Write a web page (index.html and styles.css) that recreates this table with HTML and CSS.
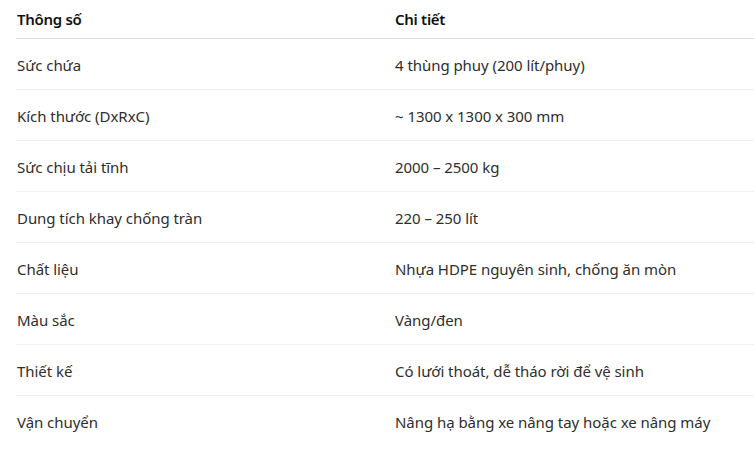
FILE: index.html
```html
<!DOCTYPE html>
<html lang="vi">
<head>
<meta charset="utf-8">
<link rel="stylesheet" href="styles.css">
</head>
<body>
<table class="spec">
  <colgroup><col class="c1"><col class="c2"></colgroup>
  <thead>
    <tr><th>Thông số</th><th>Chi tiết</th></tr>
  </thead>
  <tbody>
    <tr><td>Sức chứa</td><td>4 thùng phuy (200 lít/phuy)</td></tr>
    <tr><td>Kích thước (DxRxC)</td><td>~ 1300 x 1300 x 300 mm</td></tr>
    <tr><td>Sức chịu tải tĩnh</td><td>2000 – 2500 kg</td></tr>
    <tr><td>Dung tích khay chống tràn</td><td>220 – 250 lít</td></tr>
    <tr><td>Chất liệu</td><td>Nhựa HDPE nguyên sinh, chống ăn mòn</td></tr>
    <tr><td>Màu sắc</td><td>Vàng/đen</td></tr>
    <tr><td>Thiết kế</td><td>Có lưới thoát, dễ tháo rời để vệ sinh</td></tr>
    <tr><td>Vận chuyển</td><td>Nâng hạ bằng xe nâng tay hoặc xe nâng máy</td></tr>
  </tbody>
</table>
</body>
</html>
```
FILE: styles.css
```css
html, body {
  margin: 0;
  padding: 0;
  background: #ffffff;
}
body {
  font-family: "Noto Sans", "Open Sans", sans-serif;
  font-size: 15px;
  letter-spacing: -0.05px;
  color: #2e2e2e;
}
.spec {
  margin-left: 16px;
  width: 738px;
  border-collapse: collapse;
  table-layout: fixed;
}
.c1 { width: 378px; }
.c2 { width: 360px; }
.spec th {
  text-align: left;
  font-weight: 600;
  color: #111111;
  letter-spacing: -0.3px;
  height: 38px;
  padding: 0 0 0 1px;
  border-bottom: 1px solid #dcdcdc;
  vertical-align: middle;
}
.spec td {
  height: 47.95px;
  padding: 2px 0 0 1px;
  border-bottom: 1px solid #efefef;
  vertical-align: middle;
}
.spec tbody tr:last-child td {
  border-bottom: none;
}
```
